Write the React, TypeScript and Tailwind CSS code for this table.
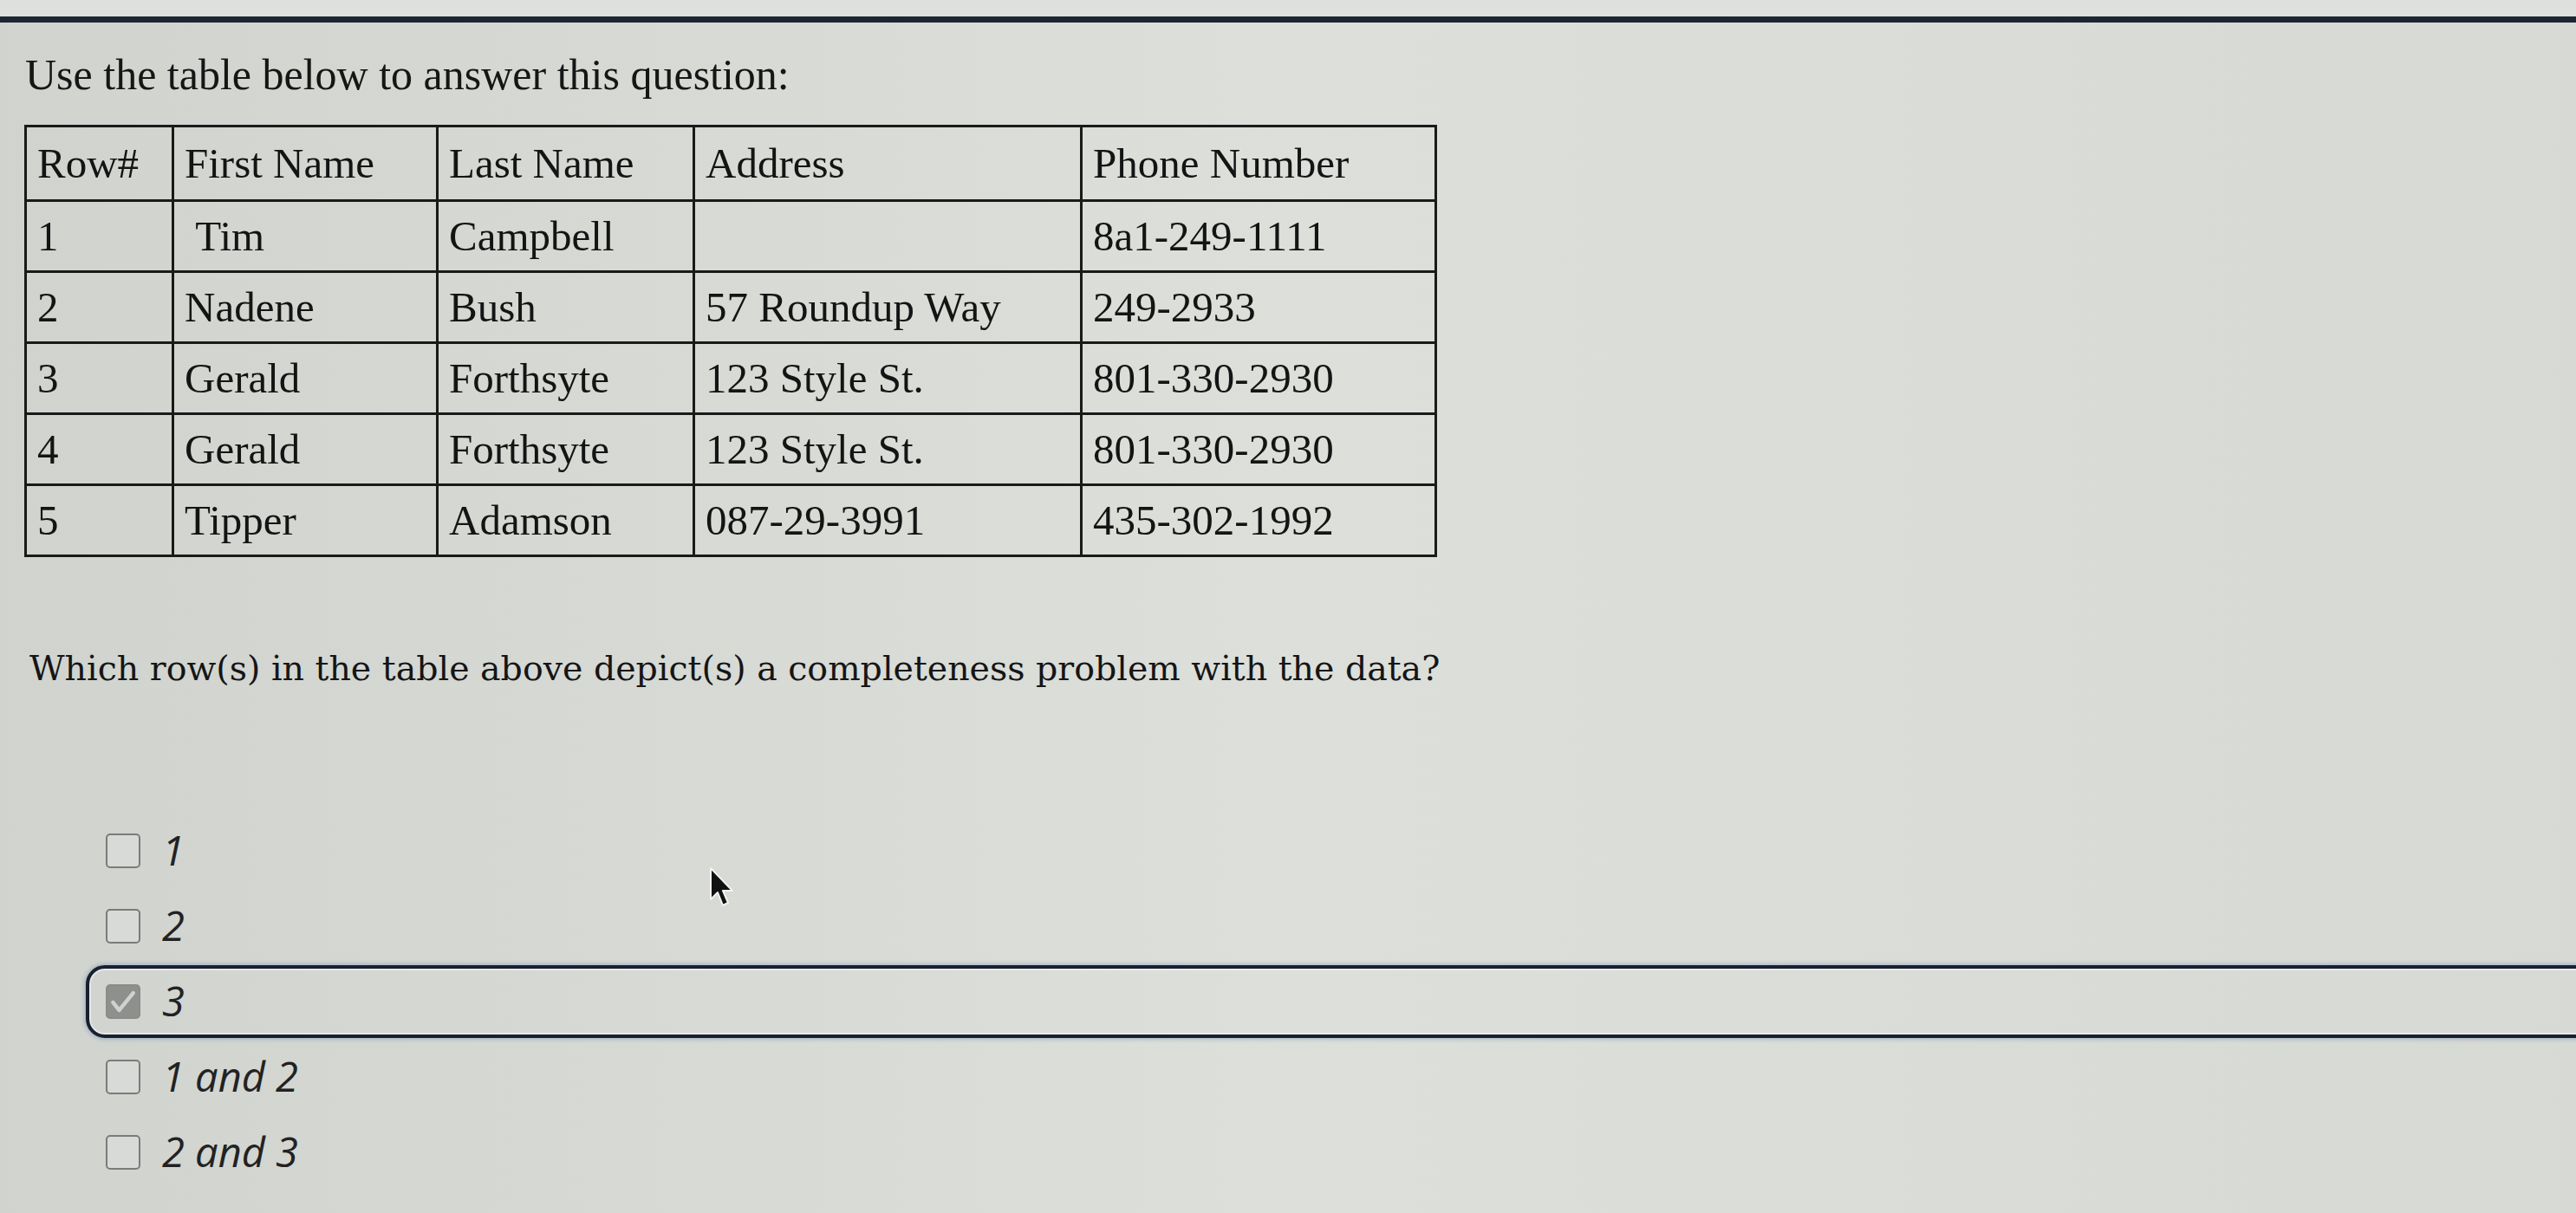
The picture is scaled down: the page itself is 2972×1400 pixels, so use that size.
import React from "react";

const rows = [
  { n: "1", first: "\u00a0Tim", last: "Campbell", addr: "", phone: "8a1-249-1111" },
  { n: "2", first: "Nadene", last: "Bush", addr: "57 Roundup Way", phone: "249-2933" },
  { n: "3", first: "Gerald", last: "Forthsyte", addr: "123 Style St.", phone: "801-330-2930" },
  { n: "4", first: "Gerald", last: "Forthsyte", addr: "123 Style St.", phone: "801-330-2930" },
  { n: "5", first: "Tipper", last: "Adamson", addr: "087-29-3991", phone: "435-302-1992" },
];

const choices = ["1", "2", "3", "1 and 2", "2 and 3"];
const picked = "3";

const Box = ({ checked }: { checked: boolean }) =>
  checked ? (
    <span className="w-[40px] h-[40px] shrink-0 rounded-[5px] bg-[#8e908d] border-2 border-[#8a8c89] flex items-center justify-center">
      <svg width="36" height="36" viewBox="0 0 40 40" fill="none">
        <path d="M7 21 L15 31 L33 9" stroke="#cfd2ce" strokeWidth="5" strokeLinecap="round" strokeLinejoin="round" />
      </svg>
    </span>
  ) : (
    <span className="w-[40px] h-[40px] shrink-0 rounded-[5px] border-2 border-[#7a7c7a] bg-[#d7dad6]" />
  );

const cell = "border-[3px] border-[#1a1a1a] px-[12px] text-left font-normal align-middle";

export default function App() {
  return (
    <div className="relative w-full h-[1400px] overflow-hidden bg-gradient-to-r from-[#d0d3ce] via-[#dcdfda] to-[#d6d9d4] text-[#1f1f1f]">
      <div className="h-[19px] bg-[#dde0dc]" />
      <div className="h-[7px] bg-[#1e2532]" />

      <div className="pl-[28px]">
        <h1 className="mt-[31px] pl-[1px] font-['Liberation_Serif',serif] text-[50px] leading-[58px] font-normal text-[#161616]">
          Use the table below to answer this question:
        </h1>

        <table className="mt-[29px] table-fixed border-collapse font-['Liberation_Serif',serif] text-[49px] leading-[56px] text-[#141414]">
          <colgroup>
            <col className="w-[170px]" />
            <col className="w-[305px]" />
            <col className="w-[296px]" />
            <col className="w-[447px]" />
            <col className="w-[409px]" />
          </colgroup>
          <thead>
            <tr className="h-[86px]">
              <th className={cell}>Row#</th>
              <th className={cell}>First Name</th>
              <th className={cell}>Last Name</th>
              <th className={cell}>Address</th>
              <th className={cell}>Phone Number</th>
            </tr>
          </thead>
          <tbody>
            {rows.map((r) => (
              <tr key={r.n} className="h-[82px]">
                <td className={cell}>{r.n}</td>
                <td className={cell}>{r.first}</td>
                <td className={cell}>{r.last}</td>
                <td className={cell}>{r.addr}</td>
                <td className={cell}>{r.phone}</td>
              </tr>
            ))}
          </tbody>
        </table>

        <p className="mt-[105px] pl-[6px] font-['DejaVu_Serif',serif] text-[39.5px] leading-[46px] text-[#151515]">
          Which row(s) in the table above depict(s) a completeness problem with the data?
        </p>

        <ul className="mt-[144px] ml-[71px] font-['Open_Sans',sans-serif] italic text-[47px] text-[#222]">
          {choices.map((c) => {
            const on = c === picked;
            return (
              <li key={c} className="h-[87px] flex items-center">
                <div
                  className={
                    on
                      ? "flex-1 -mr-[60px] h-[84px] flex items-center gap-[25px] pl-[19px] rounded-l-[22px] border-[4px] border-[#18202e] shadow-[0_0_5px_1px_rgba(70,110,170,0.45),inset_0_0_0_2px_rgba(240,244,248,0.6)]"
                      : "flex-1 h-[84px] flex items-center gap-[25px] pl-[19px] border-[4px] border-transparent"
                  }
                >
                  <Box checked={on} />
                  <span className="leading-none">{c}</span>
                </div>
              </li>
            );
          })}
        </ul>
      </div>

      <svg className="absolute left-[818px] top-[1000px]" width="30" height="50" viewBox="0 0 30 50">
        <path d="M2 2 L2 38 L10 30 L16 45 L22 42 L16 28 L27 28 Z" fill="#111" stroke="#f2f2f2" strokeWidth="2" strokeLinejoin="round" />
      </svg>
    </div>
  );
}
